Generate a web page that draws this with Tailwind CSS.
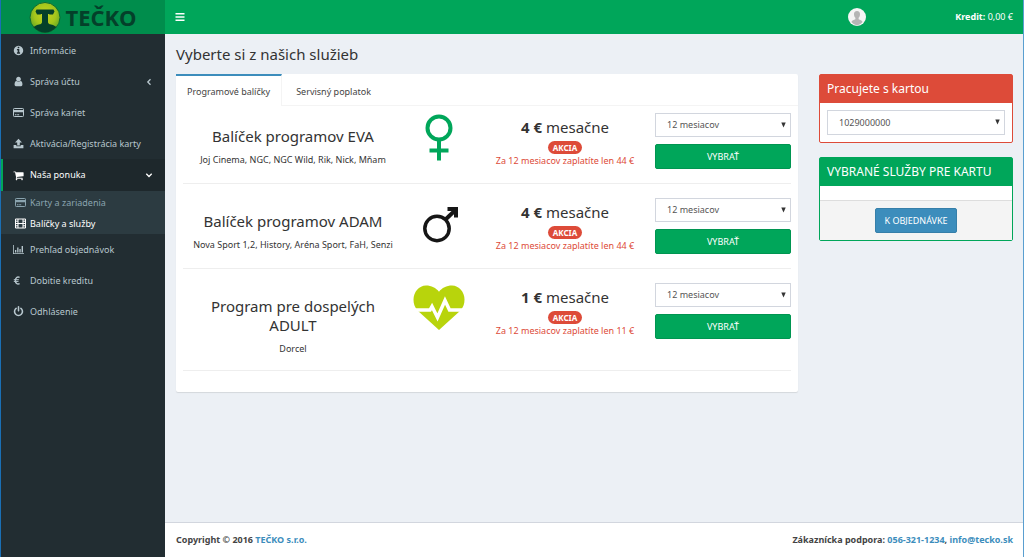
<!DOCTYPE html>
<html lang="sk">
<head>
<meta charset="utf-8">
<meta name="viewport" content="width=device-width, initial-scale=1">
<title>TEČKO</title>
<script src="https://cdn.jsdelivr.net/npm/@tailwindcss/browser@4"></script>
</head>
<body class="min-h-screen flex border-l border-l-[#1a6fb5] border-r border-r-[#5a9fd0] bg-[#ecf0f5] font-['Noto_Sans',sans-serif] text-[9px] leading-[14px] text-[#333]">

<aside class="w-[164px] shrink-0 bg-[#222d32] text-[#b8c7ce]">
  <a href="#" class="h-[34px] flex items-center justify-center gap-1 bg-[#008d4c] text-[#04402a] font-['Open_Sans',sans-serif]">
    <svg class="size-8" viewBox="0 0 32 32" aria-hidden="true">
      <defs><radialGradient id="g" cx=".5" cy=".4" r=".6"><stop offset="0" stop-color="#c6d420"/><stop offset=".6" stop-color="#a3c51c"/><stop offset="1" stop-color="#5fa426"/></radialGradient></defs>
      <circle cx="16" cy="16.500" r="15" fill="url(#g)" stroke="#0b6a33" stroke-width="1"/>
      <path d="M7.500 8.500h17l1 2-1.500 3h-3.500L20 13h-1v8.500l1 1.500 4 1 3.500 2C24.500 29.500 20.500 31.500 16 31.500S7.500 29.500 4.500 26L8 24l4-1 1-1.500V13h-1l-.5.5H8l-1.500-3z" fill="#04402a"/>
    </svg>
    <span class="text-[22px] leading-8 font-bold">TEČKO</span>
  </a>
  <nav class="pt-px">
    <ul>
      <li><a href="#" class="h-[31px] flex items-center gap-1.5 px-3">
        <svg class="size-[11px]" viewBox="0 0 1792 1792" fill="currentColor" aria-hidden="true"><path d="M1152 1376v-160q0-14-9-23t-23-9h-96v-512q0-14-9-23t-23-9h-320q-14 0-23 9t-9 23v160q0 14 9 23t23 9h96v320h-96q-14 0-23 9t-9 23v160q0 14 9 23t23 9h448q14 0 23-9t9-23zm-128-896v-160q0-14-9-23t-23-9h-192q-14 0-23 9t-9 23v160q0 14 9 23t23 9h192q14 0 23-9t9-23zm640 416q0 209-103 385.500t-279.500 279.500-385.500 103-385.500-103-279.500-279.500-103-385.500 103-385.500 279.500-279.500 385.500-103 385.500 103 279.500 279.500 103 385.500z"/></svg>
        <span>Informácie</span></a></li>
      <li><a href="#" class="h-[31px] flex items-center gap-1.5 px-3">
        <svg class="size-[11px]" viewBox="0 0 1792 1792" fill="currentColor" aria-hidden="true"><path d="M1536 1399q0 109-62.500 187t-150.500 78h-854q-88 0-150.500-78t-62.500-187q0-85 8.500-160.500t31.500-152 58.500-131 94-89 134.500-34.500q131 128 313 128t313-128q76 0 134.500 34.500t94 89 58.500 131 31.500 152 8.500 160.500zm-256-887q0 159-112.500 271.500t-271.500 112.500-271.500-112.500-112.500-271.500 112.500-271.500 271.500-112.500 271.500 112.500 112.500 271.500z"/></svg>
        <span class="grow">Správa účtu</span>
        <svg class="size-2" viewBox="0 0 8 8" fill="none" stroke="currentColor" stroke-width="1.300" aria-hidden="true"><path d="M5.500 1.300 2.800 4l2.700 2.700"/></svg></a></li>
      <li><a href="#" class="h-[31px] flex items-center gap-1.5 px-3">
        <svg class="size-[11px]" viewBox="0 0 11 11" aria-hidden="true"><rect x=".5" y="1.500" width="10" height="8" rx=".8" fill="none" stroke="currentColor"/><path d="M.5 3h10v2.300H.5zM2 7.200h1.500v1H2zm2.200 0h2v1h-2z" fill="currentColor"/></svg>
        <span>Správa kariet</span></a></li>
      <li><a href="#" class="h-[31px] flex items-center gap-1.5 px-3">
        <svg class="size-[11px]" viewBox="0 0 11 11" fill="currentColor" aria-hidden="true"><path d="M5.500.8 9 4.500H6.800V7.500H4.200V4.500H2zM.6 7h2.800v1.300h4.200V7h2.800v3.200H.6z"/></svg>
        <span>Aktivácia/Registrácia karty</span></a></li>
      <li><a href="#" class="h-8 flex items-center gap-1.5 border-l-2 border-[#00a65a] bg-[#1e282c] pl-2.5 pr-3 text-white">
        <svg class="size-[11px]" viewBox="0 0 1792 1792" fill="currentColor" aria-hidden="true"><path d="M704 1536q0 52-38 90t-90 38-90-38-38-90 38-90 90-38 90 38 38 90zm896 0q0 52-38 90t-90 38-90-38-38-90 38-90 90-38 90 38 38 90zm128-1088v512q0 24-16.500 42.500t-40.500 21.500l-1044 122q13 60 13 70 0 16-24 64h920q26 0 45 19t19 45-19 45-45 19h-1024q-26 0-45-19t-19-45q0-11 8-31.500t16-36 21.500-40 15.500-29.500l-177-823h-204q-26 0-45-19t-19-45 19-45 45-19h256q16 0 28.500 6.500t19.500 15.500 13 24.500 8 26 5.500 29.500 4.500 26h1201q26 0 45 19t19 45z"/></svg>
        <span class="grow">Naša ponuka</span>
        <svg class="size-2" viewBox="0 0 8 8" fill="none" stroke="currentColor" stroke-width="1.300" aria-hidden="true"><path d="M1.300 2.800 4 5.500l2.700-2.700"/></svg></a>
        <ul class="bg-[#2c3b41] pt-px">
          <li><a href="#" class="h-[21px] flex items-center gap-1 pl-3.5 text-[#8aa4af]">
            <svg class="size-[11px]" viewBox="0 0 11 11" aria-hidden="true"><rect x=".5" y="1.500" width="10" height="8" rx=".8" fill="none" stroke="currentColor"/><path d="M.5 3h10v2.300H.5zM2 7.200h1.500v1H2zm2.200 0h2v1h-2z" fill="currentColor"/></svg>
            <span>Karty a zariadenia</span></a></li>
          <li><a href="#" class="h-[21px] flex items-center gap-1 pl-3.5 text-white">
            <svg class="size-[11px]" viewBox="0 0 11 11" aria-hidden="true"><path d="M.5 1h10v9H.5zM3 1v9M8 1v9M3 5.500h5M.5 3.200H3M.5 5.500H3M.5 7.800H3M8 3.200h2.500M8 5.500h2.500M8 7.800h2.500" fill="none" stroke="currentColor"/></svg>
            <span>Balíčky a služby</span></a></li>
        </ul></li>
      <li><a href="#" class="h-[31px] flex items-center gap-1.5 px-3">
        <svg class="size-[11px]" viewBox="0 0 11 11" fill="currentColor" aria-hidden="true"><path d="M0 1h.8v8.200H11v.8H0zM2 6h1.300v2.500H2zm2.200-2.500h1.300v5H4.200zM6.400 5h1.300v3.500H6.400zM8.600 2H10v6.500H8.600z"/></svg>
        <span>Prehľad objednávok</span></a></li>
      <li><a href="#" class="h-[31px] flex items-center gap-1.5 px-3">
        <svg class="size-[11px]" viewBox="0 0 11 11" fill="none" stroke="currentColor" stroke-width="1.400" aria-hidden="true"><path d="M6.600 2.400C4.300 1.300 2.400 2.800 2.400 5.500s1.900 4.200 4.200 3.100"/><path d="M.8 4.700h5M.8 6.400h4.700" stroke-width="1"/></svg>
        <span>Dobitie kreditu</span></a></li>
      <li><a href="#" class="h-[31px] flex items-center gap-1.5 px-3">
        <svg class="size-[11px]" viewBox="0 0 1792 1792" fill="currentColor" aria-hidden="true"><path d="M1664 896q0 156-61 298t-164 245-245 164-298 61-298-61-245-164-164-245-61-298q0-182 80.500-343t226.500-270q43-32 95.500-25t83.500 50q32 42 24.500 94.500t-49.500 84.500q-98 74-151.500 181t-53.500 228q0 104 40.500 198.500t109.500 163.500 163.500 109.500 198.500 40.500 198.500-40.500 163.500-109.500 109.500-163.500 40.500-198.500q0-121-53.500-228t-151.500-181q-42-32-49.500-84.500t24.500-94.500q31-43 84-50t95 25q146 109 226.500 270t80.500 343zm-640-768v640q0 52-38 90t-90 38-90-38-38-90v-640q0-52 38-90t90-38 90 38 38 90z"/></svg>
        <span>Odhlásenie</span></a></li>
    </ul>
  </nav>
</aside>

<div class="grow min-w-0 flex flex-col">
  <header class="h-[34px] flex items-center bg-[#00a65a] px-2.5 text-white">
    <div class="grow">
      <button type="button" aria-label="Menu" class="block">
        <svg class="size-[10px]" viewBox="0 0 10 10" fill="currentColor" aria-hidden="true"><path d="M.5 1h9v1.600h-9zM.5 4.200h9v1.600h-9zM.5 7.400h9v1.600h-9z"/></svg>
      </button>
    </div>
    <svg class="size-[18px] mr-[89px]" viewBox="0 0 18 18" aria-hidden="true">
      <circle cx="9" cy="9" r="9" fill="#f5f5f5"/><path d="M9 3c2 0 3.200 1.300 3 3.500-.1 1.600-.6 2.600-1.400 3.300v1.400c1.600.7 3.400 1.200 4 2.800A9 9 0 0 1 9 17.500 9 9 0 0 1 3.400 14c.6-1.600 2.400-2.100 4-2.800V9.800C6.600 9.100 6.100 8.100 6 6.500 5.800 4.300 7 3 9 3z" fill="#b5b5b5"/>
    </svg>
    <span><b>Kredit:</b> 0,00 €</span>
  </header>

  <main class="grow pl-[11px] pr-2.5 pt-2.5">
    <h1 class="text-[15px] leading-5">Vyberte si z našich služieb</h1>
    <div class="mt-2.5 flex items-start gap-[21px]">
      <section class="grow min-w-0 rounded-[2px] bg-white shadow-[0_1px_1px_rgba(0,0,0,0.1)] pb-[21px]">
        <div role="tablist" class="flex h-8 border-b border-[#f4f4f4]">
          <button type="button" role="tab" aria-selected="true" class="h-8 border-t-2 border-t-[#3c8dbc] border-r border-r-[#f4f4f4] bg-white px-[11px] pt-px text-[#444]">Programové balíčky</button>
          <button type="button" role="tab" aria-selected="false" class="h-8 border-t-2 border-transparent px-3.5 pt-px text-[#444]">Servisný poplatok</button>
        </div>

        <div class="px-[7px]">
          <article class="grid grid-cols-[220fr_72fr_180fr_136fr] pt-[7px] pb-[14px] border-b border-[#eee] text-center">
            <div class="pt-[14px]">
              <h2 class="px-5 text-[15px] leading-[19px]">Balíček programov EVA</h2>
              <p class="mt-[7px]">Joj Cinema, NGC, NGC Wild, Rik, Nick, Mňam</p>
            </div>
            <svg class="w-[52px] h-12 mx-auto" viewBox="0 0 52 48" fill="none" stroke="#00a65a" stroke-width="4" aria-hidden="true"><circle cx="26" cy="15" r="11.500"/><path d="M26 26v21.500M16.500 37.500h19"/></svg>
            <div class="pt-1">
              <p class="text-[15px] leading-5"><b>4 €</b> mesačne</p>
              <p class="mt-1 h-[13px] flex justify-center"><span class="rounded-full bg-[#dd4b39] px-[5px] text-[8px] leading-[13px] font-bold text-white">AKCIA</span></p>
              <p class="text-[#dd4b39]">Za 12 mesiacov zaplatíte len 44 €</p>
            </div>
            <div>
              <div class="relative">
                <select aria-label="Viazanosť EVA" class="block w-full h-6 appearance-none border border-[#d2d6de] bg-white pl-[11px] text-[#555]"><option>12 mesiacov</option></select>
                <svg class="absolute right-[5px] top-[9px] w-[5px] h-[6px] pointer-events-none" viewBox="0 0 5 6" fill="#333" aria-hidden="true"><path d="M.3.500h4.400L2.500 5.500z"/></svg>
              </div>
              <button type="button" class="mt-[7px] block w-full h-[25px] rounded-[2px] border border-[#009551] bg-[#00a65a] text-white">VYBRAŤ</button>
            </div>
          </article>

          <article class="grid grid-cols-[220fr_72fr_180fr_136fr] pt-[14px] pb-[14px] border-b border-[#eee] text-center">
            <div class="pt-[14px]">
              <h2 class="px-5 text-[15px] leading-[19px]">Balíček programov ADAM</h2>
              <p class="mt-[7px]">Nova Sport 1,2, History, Aréna Sport, FaH, Senzi</p>
            </div>
            <svg class="w-[52px] h-12 mx-auto" viewBox="0 0 52 48" fill="none" stroke="#161616" aria-hidden="true"><circle cx="24" cy="30.500" r="12.200" stroke-width="3.500"/><path d="m32.500 21.500 10-9.500" stroke-width="4"/><path d="M34.500 11h8.500v8.500" stroke-width="4"/></svg>
            <div class="pt-1">
              <p class="text-[15px] leading-5"><b>4 €</b> mesačne</p>
              <p class="mt-1 h-[13px] flex justify-center"><span class="rounded-full bg-[#dd4b39] px-[5px] text-[8px] leading-[13px] font-bold text-white">AKCIA</span></p>
              <p class="text-[#dd4b39]">Za 12 mesiacov zaplatíte len 44 €</p>
            </div>
            <div>
              <div class="relative">
                <select aria-label="Viazanosť ADAM" class="block w-full h-6 appearance-none border border-[#d2d6de] bg-white pl-[11px] text-[#555]"><option>12 mesiacov</option></select>
                <svg class="absolute right-[5px] top-[9px] w-[5px] h-[6px] pointer-events-none" viewBox="0 0 5 6" fill="#333" aria-hidden="true"><path d="M.3.500h4.400L2.500 5.500z"/></svg>
              </div>
              <button type="button" class="mt-[7px] block w-full h-[25px] rounded-[2px] border border-[#009551] bg-[#00a65a] text-white">VYBRAŤ</button>
            </div>
          </article>

          <article class="grid grid-cols-[220fr_72fr_180fr_136fr] pt-[14px] pb-[14px] border-b border-[#eee] text-center">
            <div class="pt-[14px]">
              <h2 class="px-5 text-[15px] leading-[19px]">Program pre dospelých ADULT</h2>
              <p class="mt-[7px]">Dorcel</p>
            </div>
            <svg class="w-[52px] h-12 mx-auto" viewBox="0 0 52 48" aria-hidden="true"><path d="M26 47 4.500 27.500C1.500 24 .5 20.500.5 16.500.5 9 6 2.500 13 2.500c5.500 0 10 2.500 13 6.200 3-3.700 7.500-6.200 13-6.200 7 0 12.500 6.500 12.500 14 0 4-1 7.500-4 11z" fill="#b8d40c"/><path d="M1 27h16l2-3.500 5.500 11L32 17.500 36.500 27h15" fill="none" stroke="#fff" stroke-width="3.500"/></svg>
            <div class="pt-1">
              <p class="text-[15px] leading-5"><b>1 €</b> mesačne</p>
              <p class="mt-1 h-[13px] flex justify-center"><span class="rounded-full bg-[#dd4b39] px-[5px] text-[8px] leading-[13px] font-bold text-white">AKCIA</span></p>
              <p class="text-[#dd4b39]">Za 12 mesiacov zaplatíte len 11 €</p>
            </div>
            <div>
              <div class="relative">
                <select aria-label="Viazanosť ADULT" class="block w-full h-6 appearance-none border border-[#d2d6de] bg-white pl-[11px] text-[#555]"><option>12 mesiacov</option></select>
                <svg class="absolute right-[5px] top-[9px] w-[5px] h-[6px] pointer-events-none" viewBox="0 0 5 6" fill="#333" aria-hidden="true"><path d="M.3.500h4.400L2.500 5.500z"/></svg>
              </div>
              <button type="button" class="mt-[7px] block w-full h-[25px] rounded-[2px] border border-[#009551] bg-[#00a65a] text-white">VYBRAŤ</button>
            </div>
          </article>
        </div>
      </section>

      <aside class="w-[194px] shrink-0 flex flex-col gap-[14px]">
        <section class="rounded-[2px] border border-[#dd4b39] bg-white">
          <h2 class="h-7 bg-[#dd4b39] px-[7px] text-[12px] leading-7 text-white"><label for="karta">Pracujete s kartou</label></h2>
          <div class="p-[7px]">
            <div class="relative">
              <select id="karta" class="block w-full h-[25px] appearance-none border border-[#d2d6de] bg-white pl-[11px] text-[#555]"><option>1029000000</option></select>
              <svg class="absolute right-[5px] top-[9px] w-[5px] h-[6px] pointer-events-none" viewBox="0 0 5 6" fill="#333" aria-hidden="true"><path d="M.3.500h4.400L2.500 5.500z"/></svg>
            </div>
          </div>
        </section>
        <section class="rounded-[2px] border border-[#00a65a] bg-white">
          <h2 class="h-7 bg-[#00a65a] px-[7px] text-[12px] leading-7 whitespace-nowrap text-white">VYBRANÉ SLUŽBY PRE KARTU</h2>
          <div class="mt-[14px] flex justify-center border-t border-[#ddd] bg-[#f4f4f4] py-[7px]">
            <button type="button" class="h-[25px] rounded-[2px] border border-[#367fa9] bg-[#3c8dbc] px-2 text-white">K OBJEDNÁVKE</button>
          </div>
        </section>
      </aside>
    </div>
  </main>

  <footer class="h-[35px] flex items-center justify-between border-t border-[#d2d6de] bg-white pl-[11px] pr-2.5 font-bold text-[#444]">
    <p>Copyright © 2016 <a href="#" class="text-[#3c8dbc]">TEČKO s.r.o.</a></p>
    <p>Zákaznícka podpora: <a href="#" class="text-[#3c8dbc]">056-321-1234</a>, <a href="#" class="text-[#3c8dbc]">info@tecko.sk</a></p>
  </footer>
</div>
</body>
</html>
